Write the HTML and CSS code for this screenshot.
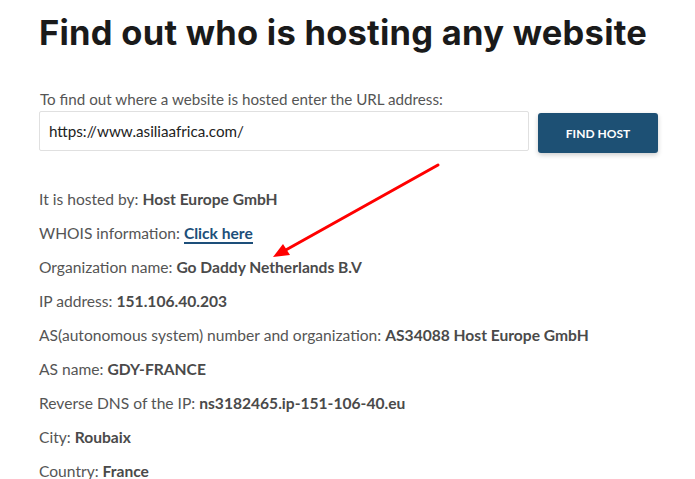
FILE: index.html
```html
<!DOCTYPE html>
<html lang="en">
<head>
<meta charset="utf-8">
<title>Find out who is hosting any website</title>
<link rel="stylesheet" href="styles.css">
</head>
<body>
<main class="page">
  <h1 class="title">Find out who is hosting any website</h1>
  <form class="lookup">
    <label class="lookup-label" for="url">To find out where a website is hosted enter the URL address:</label>
    <div class="lookup-row">
      <input id="url" class="lookup-input" type="text" value="https://www.asiliaafrica.com/">
      <button class="lookup-btn" type="button">FIND HOST</button>
    </div>
  </form>
  <div class="results">
    <p class="row">It is hosted by: <b>Host Europe GmbH</b></p>
    <p class="row">WHOIS information: <a class="link" href="#">Click here</a></p>
    <p class="row">Organization name: <b>Go Daddy Netherlands B.V</b></p>
    <p class="row">IP address: <b>151.106.40.203</b></p>
    <p class="row">AS(autonomous system) number and organization: <b>AS34088 Host Europe GmbH</b></p>
    <p class="row">AS name: <b>GDY-FRANCE</b></p>
    <p class="row">Reverse DNS of the IP: <b>ns3182465.ip-151-106-40.eu</b></p>
    <p class="row">City: <b>Roubaix</b></p>
    <p class="row">Country: <b>France</b></p>
  </div>
  <svg class="arrow" width="695" height="479" viewBox="0 0 695 479">
    <line x1="438" y1="165" x2="284" y2="251" stroke="#f00" stroke-width="3" stroke-linecap="round"/>
    <polygon points="273,257 283,244 290,255" fill="#f00"/>
  </svg>
</main>
</body>
</html>
```
FILE: styles.css
```css
html, body {
  margin: 0;
  padding: 0;
  background: #fff;
}
.page {
  position: relative;
  width: 695px;
  height: 479px;
  overflow: hidden;
  padding: 0 0 0 39px;
  box-sizing: border-box;
  font-family: Lato, "Open Sans", sans-serif;
  color: #555;
}
.title {
  margin: 0;
  padding-top: 13px;
  font-family: Inter, "Open Sans", sans-serif;
  font-weight: 700;
  font-size: 34.5px;
  line-height: 40px;
  color: #1a1a1a;
  letter-spacing: 0.25px;
}
.lookup {
  margin-top: 36px;
}
.lookup-label {
  display: block;
  font-size: 15.2px;
  line-height: 20px;
  color: #555;
  margin-left: 1px;
}
.lookup-row {
  display: flex;
  align-items: flex-start;
  gap: 9px;
  margin-top: 2px;
}
.lookup-input {
  width: 490px;
  height: 40px;
  box-sizing: border-box;
  border: 1px solid #e0e0e0;
  border-radius: 2px;
  padding: 0 9px;
  font-family: Lato, "Open Sans", sans-serif;
  font-size: 15.2px;
  color: #222;
  outline: none;
}
.lookup-btn {
  margin-top: 2px;
  width: 120px;
  height: 40px;
  border: none;
  border-radius: 3px;
  background: #1d5074;
  color: #fff;
  font-family: Lato, "Open Sans", sans-serif;
  font-weight: 700;
  font-size: 12px;
  box-shadow: 0 2px 5px rgba(0,0,0,0.2);
}
.results {
  margin-top: 29px;
}
.row {
  margin: 0;
  font-size: 15.6px;
  line-height: 34px;
  color: #555;
}
.row b {
  font-weight: 700;
  color: #4a4a4a;
}
.link {
  color: #1d4f7a;
  font-weight: 700;
  text-decoration: none;
  border-bottom: 2px solid #1d4f7a;
}
.arrow {
  position: absolute;
  left: 0;
  top: 0;
  pointer-events: none;
}
```
